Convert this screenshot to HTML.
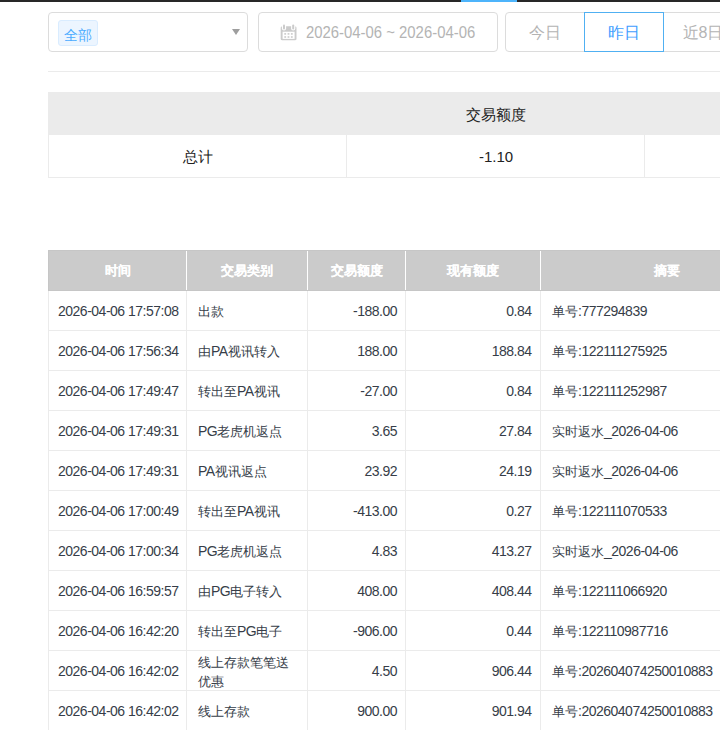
<!DOCTYPE html>
<html><head><meta charset="utf-8">
<style>
*{box-sizing:border-box;margin:0;padding:0}
html,body{width:720px;height:730px;overflow:hidden;background:#fff;font-family:"Liberation Sans",sans-serif;color:#333}
.abs{position:absolute}
#topbar{left:0;top:0;width:720px;height:2px;background:#282828}
#topblue{left:461px;top:0;width:56px;height:2px;background:#4db4fb}
#sel{left:48px;top:12px;width:200px;height:40px;border:1px solid #dcdcdc;border-radius:4px}
#tag{left:58px;top:20px;width:40px;height:26px;background:#ecf5ff;border:1px solid #d9ecff;border-radius:3px;color:#4aabff;font-size:14px;line-height:26px;padding-top:1px;text-align:center}
#arrow{left:232px;top:29px;width:0;height:0;border-left:4px solid transparent;border-right:4px solid transparent;border-top:6px solid #9e9e9e}
#date{left:258px;top:12px;width:240px;height:40px;border:1px solid #dcdcdc;border-radius:4px}
#cal{left:276px;top:20px}
#datetxt{left:306px;top:13px;height:40px;line-height:40px;font-size:16px;color:#b4b4b4;white-space:nowrap;transform:scaleX(0.93);transform-origin:0 0}
.rb{top:12px;height:40px;width:80px;border:1px solid #dcdcdc;font-size:16px;line-height:40px;text-align:center;color:#b4b4b4;background:#fff}
#r1{left:505px;border-radius:4px 0 0 4px}
#r2{left:584px;border-color:#50b0f2;color:#409eff}
#r3{left:663px}
#hline{left:48px;top:71px;width:672px;height:1px;background:#ebebeb}
.sumhead{left:48px;top:92px;width:672px;height:43px;background:#ebebeb}
.sumbody{left:48px;top:135px;width:672px;height:43px;border-left:1px solid #ebebeb;border-bottom:1px solid #ebebeb}
.vl{width:1px;background:#ebebeb}
.hl{left:48px;width:672px;height:1px;background:#ebebeb}
.sumhtxt{top:94px;height:42px;line-height:42px;text-align:center;font-size:15px;color:#222}
.sumbtxt{top:137px;height:40px;line-height:40px;text-align:center;font-size:15px;color:#222}
.mhead{left:48px;top:250px;width:672px;height:41px;background:#cbcbcb;border:1px solid #c6c6c6;border-right:none}
.hdiv{top:251px;width:1px;height:39px;background:#fff}
.mht{top:251px;height:40px;line-height:40px;text-align:center;color:#fff;font-weight:700;font-size:13px;text-shadow:0.3px 0 0 #fff}
.c{height:39px;line-height:41px;font-size:13px;padding:0 10px 0 11px;white-space:nowrap;color:#363d48}
.c.rt{text-align:right;padding-right:8px}
.c.two{line-height:19px;padding-top:2px;white-space:normal}
.c.c1{padding-left:9px}
.c.c4{padding-right:8.5px}
.n{font-size:14px;letter-spacing:-0.5px}
</style></head><body>
<div id="topbar" class="abs"></div><div id="topblue" class="abs"></div>
<div id="sel" class="abs"></div>
<div id="tag" class="abs">全部</div>
<div id="arrow" class="abs"></div>
<div id="date" class="abs"></div>
<svg id="cal" class="abs" width="24" height="24" viewBox="0 0 24 24"><rect x="4.7" y="6.2" width="15.8" height="14.1" rx="1.6" fill="#cbcbcb"/><rect x="5.9" y="3" width="4.2" height="7.6" rx="2.1" fill="#fff"/><rect x="15.1" y="3" width="4.2" height="7.6" rx="2.1" fill="#fff"/><rect x="7" y="4.6" width="2" height="5" rx="1" fill="#cbcbcb"/><rect x="16.2" y="4.6" width="2" height="5" rx="1" fill="#cbcbcb"/><rect x="6.6" y="11.7" width="12" height="7.2" fill="#fff"/><g fill="#cbcbcb"><rect x="8.3" y="13.1" width="1.8" height="1.6"/><rect x="11.6" y="13.1" width="1.8" height="1.6"/><rect x="14.9" y="13.1" width="1.8" height="1.6"/><rect x="8.3" y="16.2" width="1.8" height="1.6"/><rect x="11.6" y="16.2" width="1.8" height="1.6"/><rect x="14.9" y="16.2" width="1.8" height="1.6"/></g></svg>
<div id="datetxt" class="abs">2026-04-06 ~ 2026-04-06</div>
<div id="r1" class="abs rb">今日</div>
<div id="r3" class="abs rb">近8日</div>
<div id="r2" class="abs rb">昨日</div>
<div id="hline" class="abs"></div>
<div class="abs sumhead"></div>
<div class="abs sumhtxt" style="left:347px;width:298px">交易额度</div>
<div class="abs sumbody"></div>
<div class="abs vl" style="left:346px;top:135px;height:42px"></div>
<div class="abs vl" style="left:644px;top:135px;height:42px"></div>
<div class="abs sumbtxt" style="left:49px;width:298px">总计</div>
<div class="abs sumbtxt" style="left:347px;width:298px">-1.10</div>
<div class="abs mhead"></div>
<div class="abs hdiv" style="left:186px"></div>
<div class="abs hdiv" style="left:307px"></div>
<div class="abs hdiv" style="left:405px"></div>
<div class="abs hdiv" style="left:540px"></div>
<div class="abs mht" style="left:49px;width:137px">时间</div>
<div class="abs mht" style="left:187px;width:120px">交易类别</div>
<div class="abs mht" style="left:308px;width:97px">交易额度</div>
<div class="abs mht" style="left:406px;width:134px">现有额度</div>
<div class="abs mht" style="left:541px;width:252px">摘要</div>
<div class="abs hl" style="top:330px"></div>
<div class="abs c c1" style="left:49px;top:291px;width:137px"><span class="n">2026-04-06 17:57:08</span></div>
<div class="abs c" style="left:187px;top:291px;width:120px">出款</div>
<div class="abs c rt" style="left:308px;top:291px;width:97px"><span class="n">-188.00</span></div>
<div class="abs c rt c4" style="left:406px;top:291px;width:134px"><span class="n">0.84</span></div>
<div class="abs c" style="left:541px;top:291px;width:252px">单号<span class="n">:777294839</span></div>
<div class="abs hl" style="top:370px"></div>
<div class="abs c c1" style="left:49px;top:331px;width:137px"><span class="n">2026-04-06 17:56:34</span></div>
<div class="abs c" style="left:187px;top:331px;width:120px">由<span class="n">PA</span>视讯转入</div>
<div class="abs c rt" style="left:308px;top:331px;width:97px"><span class="n">188.00</span></div>
<div class="abs c rt c4" style="left:406px;top:331px;width:134px"><span class="n">188.84</span></div>
<div class="abs c" style="left:541px;top:331px;width:252px">单号<span class="n">:122111275925</span></div>
<div class="abs hl" style="top:410px"></div>
<div class="abs c c1" style="left:49px;top:371px;width:137px"><span class="n">2026-04-06 17:49:47</span></div>
<div class="abs c" style="left:187px;top:371px;width:120px">转出至<span class="n">PA</span>视讯</div>
<div class="abs c rt" style="left:308px;top:371px;width:97px"><span class="n">-27.00</span></div>
<div class="abs c rt c4" style="left:406px;top:371px;width:134px"><span class="n">0.84</span></div>
<div class="abs c" style="left:541px;top:371px;width:252px">单号<span class="n">:122111252987</span></div>
<div class="abs hl" style="top:450px"></div>
<div class="abs c c1" style="left:49px;top:411px;width:137px"><span class="n">2026-04-06 17:49:31</span></div>
<div class="abs c" style="left:187px;top:411px;width:120px"><span class="n">PG</span>老虎机返点</div>
<div class="abs c rt" style="left:308px;top:411px;width:97px"><span class="n">3.65</span></div>
<div class="abs c rt c4" style="left:406px;top:411px;width:134px"><span class="n">27.84</span></div>
<div class="abs c" style="left:541px;top:411px;width:252px">实时返水<span class="n">_2026-04-06</span></div>
<div class="abs hl" style="top:490px"></div>
<div class="abs c c1" style="left:49px;top:451px;width:137px"><span class="n">2026-04-06 17:49:31</span></div>
<div class="abs c" style="left:187px;top:451px;width:120px"><span class="n">PA</span>视讯返点</div>
<div class="abs c rt" style="left:308px;top:451px;width:97px"><span class="n">23.92</span></div>
<div class="abs c rt c4" style="left:406px;top:451px;width:134px"><span class="n">24.19</span></div>
<div class="abs c" style="left:541px;top:451px;width:252px">实时返水<span class="n">_2026-04-06</span></div>
<div class="abs hl" style="top:530px"></div>
<div class="abs c c1" style="left:49px;top:491px;width:137px"><span class="n">2026-04-06 17:00:49</span></div>
<div class="abs c" style="left:187px;top:491px;width:120px">转出至<span class="n">PA</span>视讯</div>
<div class="abs c rt" style="left:308px;top:491px;width:97px"><span class="n">-413.00</span></div>
<div class="abs c rt c4" style="left:406px;top:491px;width:134px"><span class="n">0.27</span></div>
<div class="abs c" style="left:541px;top:491px;width:252px">单号<span class="n">:122111070533</span></div>
<div class="abs hl" style="top:570px"></div>
<div class="abs c c1" style="left:49px;top:531px;width:137px"><span class="n">2026-04-06 17:00:34</span></div>
<div class="abs c" style="left:187px;top:531px;width:120px"><span class="n">PG</span>老虎机返点</div>
<div class="abs c rt" style="left:308px;top:531px;width:97px"><span class="n">4.83</span></div>
<div class="abs c rt c4" style="left:406px;top:531px;width:134px"><span class="n">413.27</span></div>
<div class="abs c" style="left:541px;top:531px;width:252px">实时返水<span class="n">_2026-04-06</span></div>
<div class="abs hl" style="top:610px"></div>
<div class="abs c c1" style="left:49px;top:571px;width:137px"><span class="n">2026-04-06 16:59:57</span></div>
<div class="abs c" style="left:187px;top:571px;width:120px">由<span class="n">PG</span>电子转入</div>
<div class="abs c rt" style="left:308px;top:571px;width:97px"><span class="n">408.00</span></div>
<div class="abs c rt c4" style="left:406px;top:571px;width:134px"><span class="n">408.44</span></div>
<div class="abs c" style="left:541px;top:571px;width:252px">单号<span class="n">:122111066920</span></div>
<div class="abs hl" style="top:650px"></div>
<div class="abs c c1" style="left:49px;top:611px;width:137px"><span class="n">2026-04-06 16:42:20</span></div>
<div class="abs c" style="left:187px;top:611px;width:120px">转出至<span class="n">PG</span>电子</div>
<div class="abs c rt" style="left:308px;top:611px;width:97px"><span class="n">-906.00</span></div>
<div class="abs c rt c4" style="left:406px;top:611px;width:134px"><span class="n">0.44</span></div>
<div class="abs c" style="left:541px;top:611px;width:252px">单号<span class="n">:122110987716</span></div>
<div class="abs hl" style="top:690px"></div>
<div class="abs c c1" style="left:49px;top:651px;width:137px"><span class="n">2026-04-06 16:42:02</span></div>
<div class="abs c two" style="left:187px;top:651px;width:120px">线上存款笔笔送<br>优惠</div>
<div class="abs c rt" style="left:308px;top:651px;width:97px"><span class="n">4.50</span></div>
<div class="abs c rt c4" style="left:406px;top:651px;width:134px"><span class="n">906.44</span></div>
<div class="abs c" style="left:541px;top:651px;width:252px">单号<span class="n">:202604074250010883</span></div>
<div class="abs hl" style="top:730px"></div>
<div class="abs c c1" style="left:49px;top:691px;width:137px"><span class="n">2026-04-06 16:42:02</span></div>
<div class="abs c" style="left:187px;top:691px;width:120px">线上存款</div>
<div class="abs c rt" style="left:308px;top:691px;width:97px"><span class="n">900.00</span></div>
<div class="abs c rt c4" style="left:406px;top:691px;width:134px"><span class="n">901.94</span></div>
<div class="abs c" style="left:541px;top:691px;width:252px">单号<span class="n">:202604074250010883</span></div>
<div class="abs vl" style="left:48px;top:291px;height:440px"></div>
<div class="abs vl" style="left:186px;top:291px;height:440px"></div>
<div class="abs vl" style="left:307px;top:291px;height:440px"></div>
<div class="abs vl" style="left:405px;top:291px;height:440px"></div>
<div class="abs vl" style="left:540px;top:291px;height:440px"></div>
</body></html>
